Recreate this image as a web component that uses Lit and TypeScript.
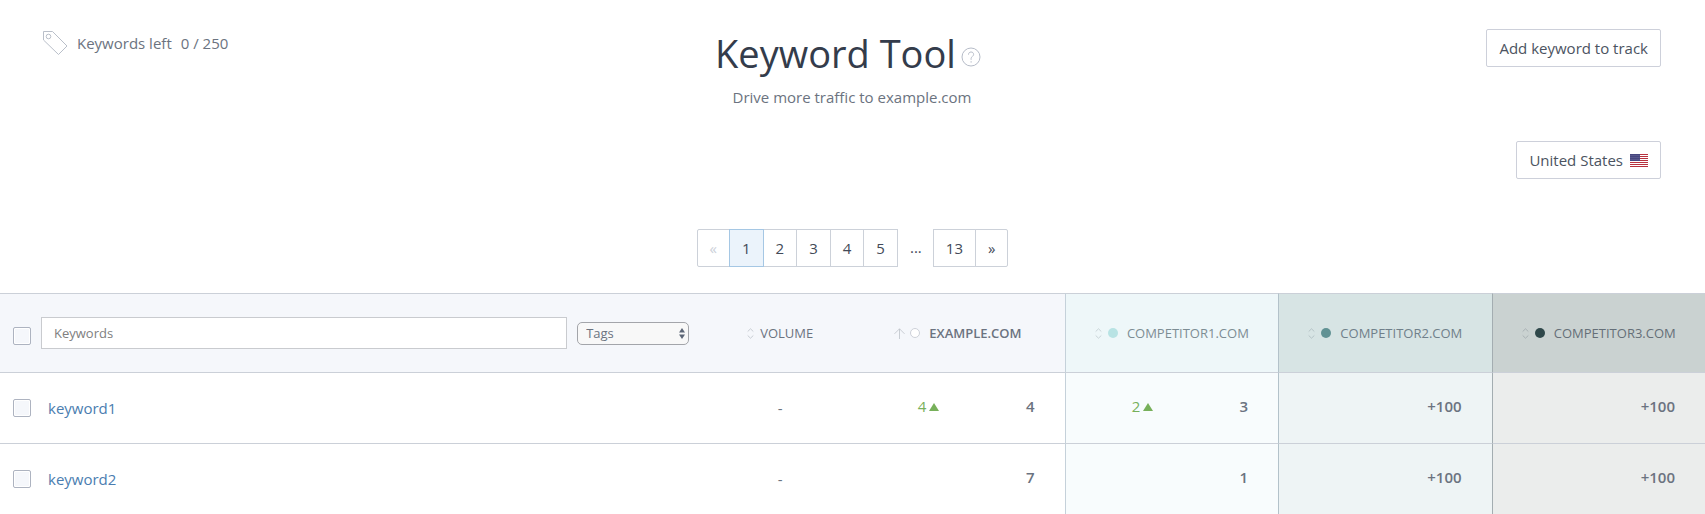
import { LitElement, html, css, svg, nothing } from "lit";
import { customElement, state } from "lit/decorators.js";

interface Rank {
  value: string;
  change?: string;
}

interface Row {
  keyword: string;
  volume: string;
  ranks: Rank[];
}

const SITES = [
  { name: "EXAMPLE.COM", tone: "own" },
  { name: "COMPETITOR1.COM", tone: "c1" },
  { name: "COMPETITOR2.COM", tone: "c2" },
  { name: "COMPETITOR3.COM", tone: "c3" },
];

const ROWS: Row[] = [
  {
    keyword: "keyword1",
    volume: "-",
    ranks: [{ value: "4", change: "4" }, { value: "3", change: "2" }, { value: "+100" }, { value: "+100" }],
  },
  {
    keyword: "keyword2",
    volume: "-",
    ranks: [{ value: "7" }, { value: "1" }, { value: "+100" }, { value: "+100" }],
  },
];

const tagIcon = html`<svg class="tag" width="25" height="25" viewBox="0 0 25 25" aria-hidden="true">
  <path d="M.5.5H9.5L24 15 15.500 23.500.5 9Z" /><circle cx="5.500" cy="5.500" r="2.300" />
</svg>`;

const helpIcon = html`<svg width="20" height="20" viewBox="0 0 20 20" aria-hidden="true">
  <circle cx="10" cy="10" r="9" />
  <path d="M7.500 7.600C7.500 6 8.600 5 10.100 5s2.500 1 2.500 2.400c0 2-2.500 2.200-2.500 4.100v1.300M10.100 14.200v1.400" />
</svg>`;

const sortIcon = html`<svg class="sort" width="7" height="11" viewBox="0 0 7 11" aria-hidden="true">
  <path d="M.7 3.500 3.500.8 6.300 3.500M.7 7.500 3.500 10.200 6.300 7.500" />
</svg>`;

const upIcon = html`<svg class="sort" width="11" height="11" viewBox="0 0 11 11" aria-hidden="true">
  <path d="M5.500 11V.8M.5 5.800 5.500.8 10.500 5.800" />
</svg>`;

const flagIcon = html`<svg width="18" height="13" viewBox="0 0 18 13" aria-hidden="true">
  <rect width="18" height="13" fill="#fff" />
  ${[0, 2, 4, 6, 8, 10, 12].map((y) => svg`<rect y=${y} width="18" height="1" fill="#b8323f" />`)}
  <rect width="10" height="7" fill="#46467f" />
  ${[1, 3, 5].map((y) =>
    [1, 3, 5, 7, 9].map((x) => svg`<circle cx=${x} cy=${y + 0.5} r=".4" fill="#9a9bc0" />`)
  )}
</svg>`;

@customElement("app-root")
export class AppRoot extends LitElement {
  static styles = css`
    :host {
      display: block;
      background: #fff;
      color: #6b7380;
      font: 15px/20px "Open Sans", "Noto Sans", sans-serif;
    }
    * {
      box-sizing: border-box;
    }
    svg {
      display: block;
      flex: none;
      fill: none;
    }
    button,
    input,
    select {
      margin: 0;
      font: inherit;
      color: inherit;
    }
    .top {
      display: grid;
      grid-template-columns: 1fr auto 1fr;
      align-items: start;
      padding: 29px 44px 0 43px;
    }
    .quota {
      display: flex;
      align-items: flex-start;
      gap: 9px;
      padding-top: 2px;
      line-height: 24px;
    }
    .tag {
      stroke: #b9bfc9;
    }
    .heading {
      text-align: center;
    }
    .title {
      display: flex;
      align-items: center;
      gap: 5px;
    }
    h1 {
      margin: 0;
      font-size: 38px;
      font-weight: 400;
      line-height: 48px;
      color: #343c4b;
    }
    .help {
      padding: 8px 8px 0 0;
      border: 0;
      background: none;
      stroke: #b6bcc8;
    }
    .heading p {
      margin: 10px 0 0;
    }
    .actions {
      display: flex;
      flex-direction: column;
      align-items: flex-end;
      gap: 74px;
    }
    .button {
      display: flex;
      align-items: center;
      gap: 7px;
      height: 38px;
      padding: 0 12px;
      border: 1px solid #cdd0da;
      border-radius: 2px;
      background: #fff;
      color: #4b5361;
    }
    .pages {
      display: flex;
      justify-content: center;
      margin: 50px 0 26px;
    }
    .page {
      height: 38px;
      margin-left: -1px;
      padding: 0 12px;
      border: 1px solid #ccd1d9;
      background: #fff;
      color: #434a58;
    }
    .page:first-child {
      margin-left: 0;
      border-radius: 2px 0 0 2px;
    }
    .page:last-child {
      border-radius: 0 2px 2px 0;
    }
    .page:disabled {
      color: #ccd1d9;
    }
    .page.current {
      position: relative;
      border-color: #a5c7e4;
      background: #ebf3fb;
    }
    .dots {
      width: 36px;
      line-height: 36px;
      text-align: center;
      color: #434a58;
    }
    table {
      width: 100%;
      table-layout: fixed;
      border-collapse: separate;
      border-spacing: 0;
    }
    .check-col {
      width: 41px;
    }
    .volume-col {
      width: 8.33%;
    }
    .site-col {
      width: 12.52%;
    }
    th,
    td {
      height: 71px;
      padding: 0;
      border-top: 1px solid #cbd0d8;
      text-align: left;
      font-weight: 400;
    }
    th {
      height: 79px;
      background: #f5f7fb;
      font-size: 13px;
    }
    .check {
      display: block;
      appearance: none;
      width: 18px;
      height: 18px;
      margin-left: 13px;
      border: 1px solid #adb3c0;
      border-radius: 2px;
      background: #f5f7fb;
      box-shadow: inset 0 0 0 1px #fff;
    }
    th .check {
      margin-top: 6px;
    }
    .filters {
      display: flex;
      align-items: center;
      gap: 10px;
      padding-right: 20px;
    }
    .search {
      flex: 1;
      min-width: 0;
      height: 32px;
      padding: 0 12px;
      border: 1px solid #c9cbcf;
      border-radius: 0;
      background: #fff;
    }
    .search::placeholder {
      color: #808080;
      opacity: 1;
    }
    .picker {
      display: grid;
      align-items: center;
      width: 112px;
    }
    .picker > * {
      grid-area: 1 / 1;
    }
    .picker svg {
      justify-self: end;
      margin-right: 4px;
      fill: #5c6677;
      pointer-events: none;
      z-index: 1;
    }
    .tags {
      appearance: none;
      width: 100%;
      height: 23px;
      padding: 0 8px;
      border: 1px solid #a3a5aa;
      border-radius: 5px;
      background: #f8f8f8;
    }
    .sorter {
      display: flex;
      align-items: center;
      justify-content: center;
      width: 100%;
      padding: 0;
      border: 0;
      background: none;
      white-space: nowrap;
    }
    .sort {
      stroke: currentColor;
      opacity: 0.4;
      stroke-width: 0.8;
    }
    .sorter .name {
      margin-left: 6px;
    }
    .dot {
      width: 10px;
      height: 10px;
      margin: 0 3px 0 6px;
      border-radius: 50%;
    }
    .own .dot {
      margin-left: 5px;
      border: 1px solid #cdd1d9;
      background: #fff;
    }
    .own .name {
      font-weight: 600;
    }
    .c1 .dot {
      background: #b8e3e4;
    }
    .c2 .dot {
      background: #619294;
    }
    .c3 .dot {
      background: #2f484a;
    }
    th.c1 {
      background: #eef7f9;
      color: #7d8d94;
    }
    th.c2 {
      background: #d7e4e4;
      color: #70808a;
    }
    th.c3 {
      background: #cad2d1;
      color: #656f78;
    }
    td.c1 {
      background: #f8fcfd;
    }
    td.c2 {
      background: #eef4f5;
    }
    td.c3 {
      background: #ebedec;
    }
    .c1 {
      border-left: 1px solid #c5d1da;
    }
    .c2 {
      border-left: 1px solid #b3c2ca;
    }
    .c3 {
      border-left: 1px solid #a3adb1;
    }
    .link {
      margin-left: 7px;
      color: #4a7db0;
      text-decoration: none;
    }
    .volume {
      text-align: center;
    }
    .rank {
      display: flex;
      align-items: center;
      justify-content: space-between;
      padding: 0 30px 5px 0;
      font-weight: 600;
    }
    .change {
      display: flex;
      align-items: center;
      justify-content: flex-end;
      gap: 3px;
      width: 48%;
      font-weight: 400;
      color: #77b05a;
    }
    .change svg {
      margin-top: 3px;
      fill: #77b05a;
    }
  `;

  @state() private page = "1";

  private renderPage(label: string) {
    const current = label === this.page;
    return html`<button
      class="page ${current ? "current" : ""}"
      aria-current=${current ? "page" : nothing}
      @click=${() => (this.page = label)}
    >${label}</button>`;
  }

  private renderRow(row: Row) {
    return html`<tr>
      <td><input class="check" type="checkbox" aria-label=${`Select ${row.keyword}`} /></td>
      <td><a class="link" href="#">${row.keyword}</a></td>
      <td class="volume">${row.volume}</td>
      ${row.ranks.map(
        (rank, i) => html`<td class=${SITES[i].tone}>
          <div class="rank">
            <span class="change">
              ${rank.change
                ? html`<span>${rank.change}</span
                    ><svg width="10" height="8" viewBox="0 0 10 8" aria-hidden="true"><path d="M5 0 10 8H0Z" /></svg>`
                : nothing}
            </span>
            <span>${rank.value}</span>
          </div>
        </td>`
      )}
    </tr>`;
  }

  render() {
    return html`
      <header class="top">
        <div class="quota">${tagIcon}<span>Keywords left</span><span>0 / 250</span></div>
        <div class="heading">
          <div class="title">
            <h1>Keyword Tool</h1>
            <button class="help" aria-label="Help">${helpIcon}</button>
          </div>
          <p>Drive more traffic to example.com</p>
        </div>
        <div class="actions">
          <button class="button">Add keyword to track</button>
          <button class="button">United States ${flagIcon}</button>
        </div>
      </header>
      <nav class="pages" aria-label="Pages">
        <button class="page" disabled>«</button>
        ${["1", "2", "3", "4", "5"].map((p) => this.renderPage(p))}
        <span class="dots">...</span>
        ${this.renderPage("13")}
        <button class="page">»</button>
      </nav>
      <table>
        <colgroup>
          <col class="check-col" />
          <col />
          <col class="volume-col" />
          ${SITES.map(() => html`<col class="site-col" />`)}
        </colgroup>
        <thead>
          <tr>
            <th><input class="check" type="checkbox" aria-label="Select all" /></th>
            <th>
              <div class="filters">
                <input class="search" type="text" placeholder="Keywords" aria-label="Keywords" />
                <div class="picker">
                  <select class="tags" aria-label="Tags">
                    <option>Tags</option>
                  </select>
                  <svg width="6" height="11" viewBox="0 0 6 11" aria-hidden="true">
                    <path d="M3 0 6 4.500H0ZM0 6.500H6L3 11Z" />
                  </svg>
                </div>
              </div>
            </th>
            <th><button class="sorter">${sortIcon}<span class="name">VOLUME</span></button></th>
            ${SITES.map(
              (site) => html`<th class=${site.tone}>
                <button class="sorter">
                  ${site.tone === "own" ? upIcon : sortIcon}<span class="dot"></span><span class="name">${site.name}</span>
                </button>
              </th>`
            )}
          </tr>
        </thead>
        <tbody>
          ${ROWS.map((row) => this.renderRow(row))}
        </tbody>
      </table>
    `;
  }
}
